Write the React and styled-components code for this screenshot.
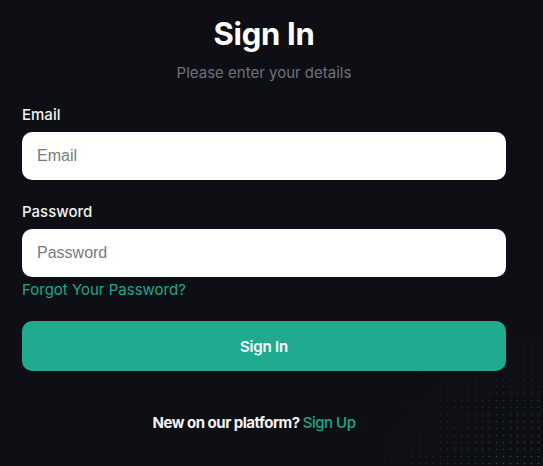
import React from 'react';
import styled, { createGlobalStyle } from 'styled-components';

const GlobalStyle = createGlobalStyle`
  html, body {
    margin: 0;
    padding: 0;
    background: #0e0f14;
  }
  body {
    font-family: Inter, "Noto Sans", sans-serif;
    color: #fff;
  }
`;

const Page = styled.main`
  position: relative;
  width: 543px;
  height: 466px;
  overflow: hidden;
  background: #0e0f14;

  &:before {
    position: absolute;
    content: '';
    right: -30px;
    bottom: -30px;
    width: 220px;
    height: 190px;
    background-image: radial-gradient(circle, rgba(70, 120, 115, 0.5) 0.7px, transparent 1.1px);
    background-size: 7px 7px;
    -webkit-mask-image: radial-gradient(ellipse at 100% 100%, #000 25%, transparent 68%);
    mask-image: radial-gradient(ellipse at 100% 100%, #000 25%, transparent 68%);
    pointer-events: none;
  }
`;

const Form = styled.form`
  position: relative;
  width: 484px;
  margin-left: 22px;
  padding-top: 14px;
  display: flex;
  flex-direction: column;
`;

const Title = styled.h1`
  margin: 0;
  text-align: center;
  font-size: 31px;
  font-weight: 700;
  line-height: 40px;
  letter-spacing: -0.3px;
`;

const Subtitle = styled.p`
  margin: 10px 0 0;
  text-align: center;
  font-size: 15px;
  line-height: 18px;
  color: #6d7278;
`;

const Field = styled.label`
  display: flex;
  flex-direction: column;
  gap: 8px;
  margin-top: ${p => p.$top}px;
`;

const Label = styled.span`
  font-size: 15px;
  font-weight: 500;
  line-height: 18px;
  color: #f2f2f2;
`;

const Input = styled.input`
  box-sizing: border-box;
  height: 48px;
  border: none;
  border-radius: 10px;
  background: #fff;
  padding: 0 15px;
  font-family: "Liberation Sans", Arial, sans-serif;
  font-size: 16px;
  color: #222;
  outline: none;

  &::placeholder {
    color: #7a7a7a;
  }
`;

const Forgot = styled.a`
  margin-top: 4px;
  font-size: 15px;
  line-height: 18px;
  color: #1fa68d;
  text-decoration: none;
  align-self: flex-start;
`;

const Button = styled.button`
  margin-top: 22px;
  height: 50px;
  border: none;
  border-radius: 10px;
  background: #20ab91;
  color: #fff;
  font-family: Inter, sans-serif;
  font-size: 15px;
  font-weight: 600;
  letter-spacing: -0.2px;
`;

const Footer = styled.p`
  margin: 43px 0 0;
  padding-right: 20px;
  text-align: center;
  font-size: 15px;
  font-weight: 700;
  letter-spacing: -0.5px;
  line-height: 18px;
  color: #f4f4f4;
`;

const Link = styled.a`
  color: #1fa68d;
  font-weight: 500;
  text-decoration: none;
`;

const App = () => {
  return (
    <Page>
      <GlobalStyle />
      <Form onSubmit={e => e.preventDefault()}>
        <Title>Sign In</Title>
        <Subtitle>Please enter your details</Subtitle>

        <Field $top={24}>
          <Label>Email</Label>
          <Input type="email" placeholder="Email" />
        </Field>

        <Field $top={23}>
          <Label>Password</Label>
          <Input type="password" placeholder="Password" />
        </Field>

        <Forgot href="#">Forgot Your Password?</Forgot>

        <Button type="submit">Sign In</Button>

        <Footer>
          New on our platform? <Link href="#">Sign Up</Link>
        </Footer>
      </Form>
    </Page>
  );
};

export default App;
